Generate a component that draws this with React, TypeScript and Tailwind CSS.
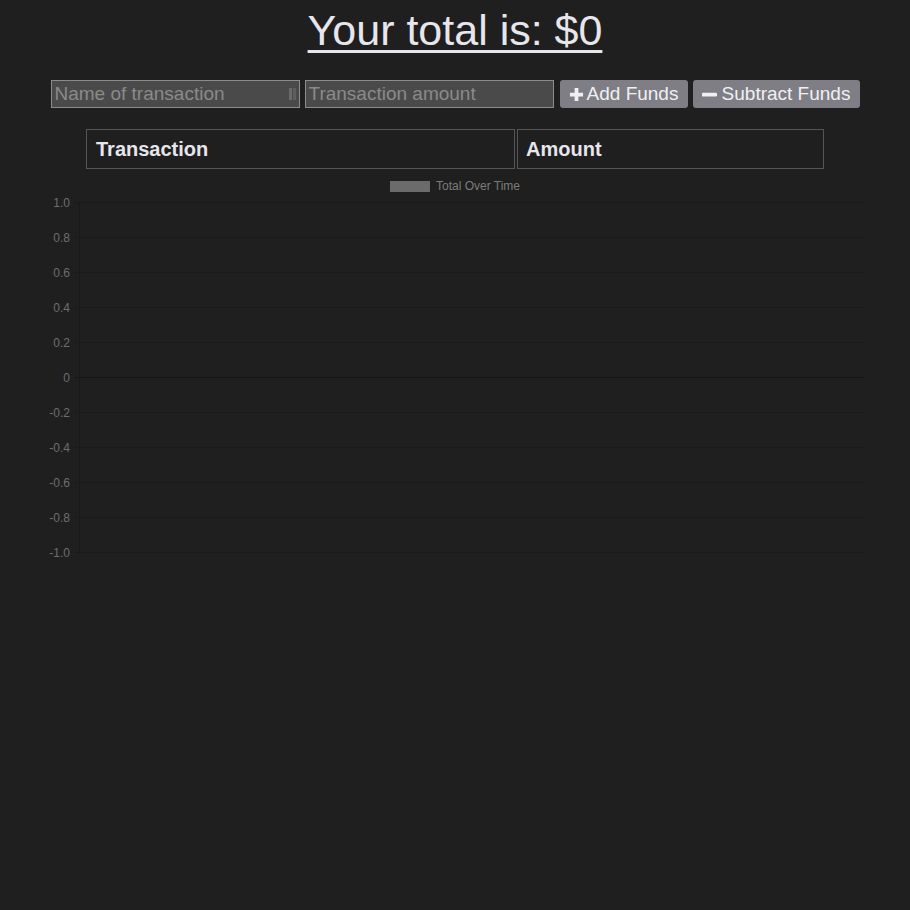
import React from "react";

const ticks = [1, 0.8, 0.6, 0.4, 0.2, 0, -0.2, -0.4, -0.6, -0.8, -1];

function TotalChart() {
    // canvas-like drawing, x offset 45 in page
    return (
        <svg width="820" height="390" className="block mx-auto" style={{ fontFamily: "'Liberation Sans', Arial, sans-serif" }}>
            {/* legend */}
            <rect x="345" y="5" width="40" height="11" fill="#6b6b6b" />
            <text x="391" y="14" fontSize="12" fill="#7c7c7c">Total Over Time</text>

            {/* grid */}
            {ticks.map((t, i) => {
                const y = 26.5 + i * 35;
                return (
                    <g key={t}>
                        <line x1="30" x2="820" y1={y} y2={y} stroke={t === 0 ? "#151515" : "#191919"} strokeWidth="1" />
                        <text x="25" y={y + 4} fontSize="12" fill="#6e6e6e" textAnchor="end">
                            {t === 0 ? "0" : t.toFixed(1)}
                        </text>
                    </g>
                );
            })}
            <line x1="34.5" x2="34.5" y1="26" y2="376" stroke="#191919" />
        </svg>
    );
}

export default function App() {
    return (
        <div className="min-h-[910px] bg-[#1f1f1f] text-[#e6e6ec] font-['Liberation_Sans',Arial,sans-serif]">
            {/* Title */}
            <h1 className="text-center text-[43px] leading-[50px] pt-[5px] underline decoration-[3px] underline-offset-[5px]">
                Your total is: $0
            </h1>

            {/* Form */}
            <div className="flex justify-center items-center gap-[5px] mt-[25px]">
                <div className="relative">
                    <input
                        type="text"
                        placeholder="Name of transaction"
                        className="w-[249px] h-[28px] bg-[#4a4a4a] border border-[#8c8c8c] px-[3px] text-[19px] text-[#e6e6ec] placeholder:text-[#8a8a8a] outline-none"
                    />
                    <span className="absolute right-[4px] top-[8px] flex gap-[1px]">
                        <span className="w-[3px] h-[12px] bg-[#6a6a6a]" />
                        <span className="w-[3px] h-[12px] bg-[#5e5e5e]" />
                    </span>
                </div>
                <input
                    type="text"
                    placeholder="Transaction amount"
                    className="w-[249px] h-[28px] bg-[#4a4a4a] border border-[#8c8c8c] px-[3px] text-[19px] text-[#e6e6ec] placeholder:text-[#8a8a8a] outline-none"
                />
                <button className="ml-[1px] w-[128px] h-[28px] bg-[#7e7e84] rounded-[3px] text-[19px] text-[#f0f0f4] flex items-center justify-center gap-[3px]">
                    <svg width="15" height="15" viewBox="0 0 16 16">
                        <path d="M6 1h4v5h5v4h-5v5H6v-5H1V6h5z" fill="#f0f0f4" />
                    </svg>
                    Add Funds
                </button>
                <button className="w-[167px] h-[28px] bg-[#7e7e84] rounded-[3px] text-[19px] text-[#f0f0f4] flex items-center justify-center gap-[5px]">
                    <svg width="15" height="15" viewBox="0 0 16 16">
                        <rect x="0" y="6" width="16" height="4" rx="1" fill="#f0f0f4" />
                    </svg>
                    Subtract Funds
                </button>
            </div>

            {/* Table */}
            <div className="flex justify-center mt-[19px]">
                <table className="w-[742px] border-separate border-spacing-[2px]">
                    <thead>
                        <tr>
                            <th className="w-[429px] h-[40px] border border-[#555] text-left pl-[9px] text-[20px] font-bold">Transaction</th>
                            <th className="h-[40px] border border-[#555] text-left pl-[8px] text-[20px] font-bold">Amount</th>
                        </tr>
                    </thead>
                </table>
            </div>

            {/* Chart */}
            <div className="mt-[5px]">
                <TotalChart />
            </div>
        </div>
    );
}
